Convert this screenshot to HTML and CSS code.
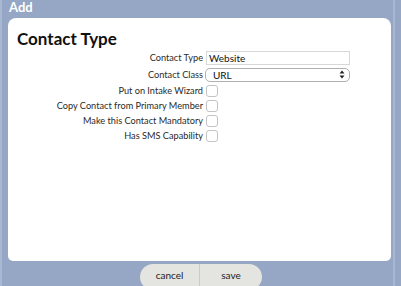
FILE: index.html
```html
<!DOCTYPE html>
<html>
<head>
<meta charset="utf-8">
<link rel="stylesheet" href="styles.css">
</head>
<body>
<div class="frame">
  <div class="title">Add</div>
  <div class="panel">
    <h2 class="heading">Contact Type</h2>
    <div class="form">
      <div class="row row-input">
        <label class="label">Contact Type</label>
        <div class="text-input">Website</div>
      </div>
      <div class="row row-input">
        <label class="label">Contact Class</label>
        <div class="select">
          <span>URL</span>
          <svg class="arrows" width="6" height="9" viewBox="0 0 6 9"><path d="M0.5 3.5 L3 0.5 L5.5 3.5 Z M0.5 5.5 L3 8.5 L5.5 5.5 Z" fill="#222"/></svg>
        </div>
      </div>
      <div class="row row-check">
        <label class="label">Put on Intake Wizard</label>
        <span class="check"></span>
      </div>
      <div class="row row-check">
        <label class="label">Copy Contact from Primary Member</label>
        <span class="check"></span>
      </div>
      <div class="row row-check">
        <label class="label">Make this Contact Mandatory</label>
        <span class="check"></span>
      </div>
      <div class="row row-check">
        <label class="label">Has SMS Capability</label>
        <span class="check"></span>
      </div>
    </div>
  </div>
  <div class="footer">
    <div class="buttons">
      <button class="btn btn-left">cancel</button>
      <button class="btn btn-right">save</button>
    </div>
  </div>
</div>
</body>
</html>
```

FILE: styles.css
```css
html, body {
  margin: 0;
  padding: 0;
  background: #95a7c4;
  font-family: Lato, "Open Sans", sans-serif;
  height: 286px;
  overflow: hidden;
}
.frame {
  width: 391px;
  height: 286px;
  border-left: 2px solid #a9b8d2;
  border-right: 2px solid #a9b8d2;
  display: flex;
  flex-direction: column;
}
.title {
  flex-shrink: 0;
  height: 18px;
  line-height: 14px;
  padding-left: 7px;
  color: #ffffff;
  font-size: 13px;
  font-weight: 700;
}
.panel {
  flex-shrink: 0;
  margin-left: 6px;
  width: 383px;
  height: 243px;
  background: #ffffff;
  border-radius: 8px 8px 5px 5px;
  box-sizing: border-box;
  padding: 10px 0 0 9px;
}
.heading {
  margin: 0;
  font-size: 17px;
  font-weight: 700;
  color: #111;
  line-height: 21px;
}
.form {
  display: flex;
  flex-direction: column;
}
.row {
  display: flex;
  align-items: center;
}
.row-input { height: 17px; }
.row-check { height: 15px; }
.label {
  width: 186px;
  text-align: right;
  font-size: 9.2px;
  color: #2a2a2a;
  padding-right: 3px;
}
.text-input {
  width: 140px;
  height: 12px;
  border: 1px solid #d8d8d8;
  font-size: 10px;
  line-height: 12px;
  padding-left: 2px;
  color: #111;
}
.select {
  height: 12px;
  border: 1px solid #b0b0b0;
  border-radius: 5px;
  display: flex;
  align-items: center;
  justify-content: space-between;
  font-size: 10px;
  padding: 0 4px 0 7px;
  margin-left: -1px;
  width: 132px;
  color: #111;
}
.arrows { display: block; }
.check {
  width: 10px;
  height: 10px;
  border: 1px solid #c4c4c4;
  border-radius: 3px;
  display: block;
}
.footer {
  flex: 1;
  display: flex;
  justify-content: center;
  padding-top: 3px;
}
.buttons {
  display: flex;
  margin-left: 7px;
}
.btn {
  border: none;
  background: #e4e4e0;
  font-family: Lato, "Open Sans", sans-serif;
  font-size: 10px;
  color: #222;
  height: 26px;
  padding: 0;
  margin: 0;
  line-height: 22px;
  padding-bottom: 4px;
}
.btn-left {
  width: 60px;
  border-radius: 13px 0 0 13px;
  border-right: 1px solid #c6cad4;
}
.btn-right {
  width: 62px;
  border-radius: 0 13px 13px 0;
}
```
